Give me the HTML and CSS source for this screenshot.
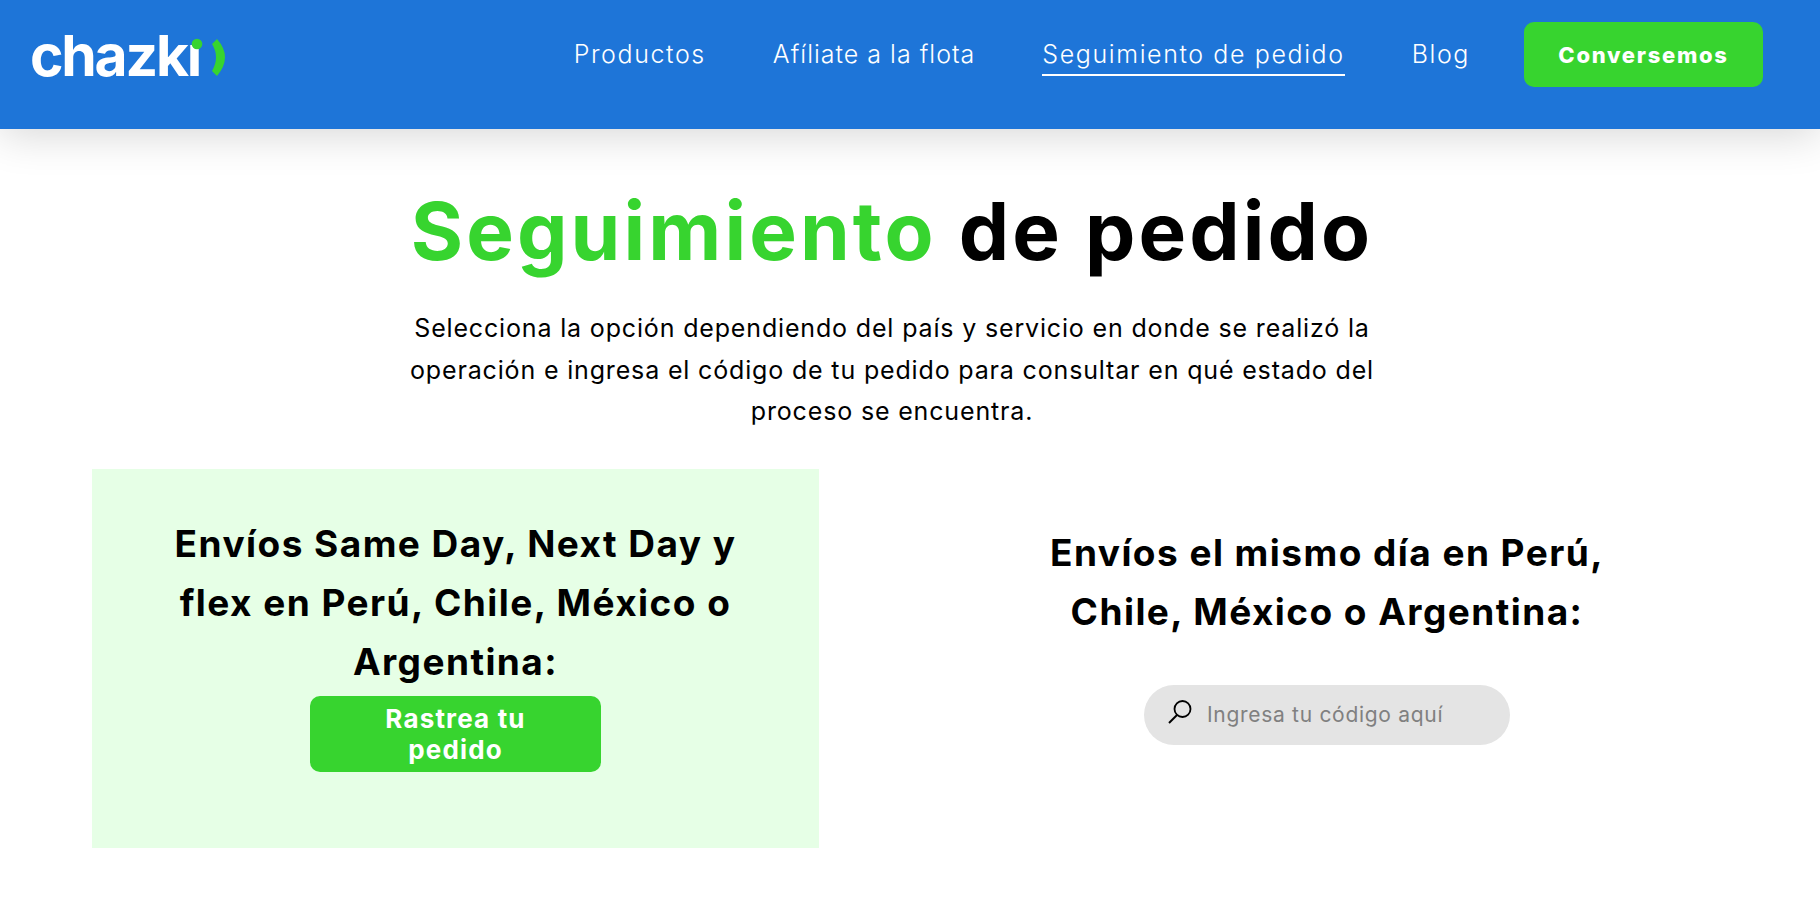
FILE: index.html
```html
<!DOCTYPE html>
<html lang="es">
<head>
<meta charset="utf-8">
<title>Seguimiento de pedido</title>
<link rel="stylesheet" href="styles.css">
</head>
<body>
<header class="header">
  <a class="logo" href="#"><span class="logo-text">chazkı</span><svg class="logo-mark" width="50" height="42" viewBox="0 0 50 42"><circle cx="16" cy="6" r="5.3" fill="#37d42f"/><path d="M36 1 Q52 19 36 38 L31 33 Q39 19 31 6 Z" fill="#37d42f"/></svg></a>
  <nav class="nav">
    <a class="nav-link" href="#">Productos</a>
    <a class="nav-link nav-tight" href="#">Afíliate a la flota</a>
    <a class="nav-link nav-active" href="#">Seguimiento de pedido</a>
    <a class="nav-link" href="#">Blog</a>
    <a class="cta" href="#">Conversemos</a>
  </nav>
</header>
<main class="main">
  <div class="hero">
    <h1 class="title"><span class="title-green">Seguimiento</span> de pedido</h1>
    <p class="intro">Selecciona la opción dependiendo del país y servicio en donde se realizó la operación e ingresa el código de tu pedido para consultar en qué estado del proceso se encuentra.</p>
  </div>
  <section class="cols">
    <div class="panel">
      <h2 class="panel-title">Envíos Same Day, Next Day y flex en Perú, Chile, México o Argentina:</h2>
      <a class="track" href="#">Rastrea tu pedido</a>
    </div>
    <div class="side">
      <h2 class="side-title">Envíos el mismo día en Perú, Chile, México o Argentina:</h2>
      <label class="search">
        <svg class="search-icon" width="26" height="26" viewBox="0 0 26 26"><circle cx="15.5" cy="10" r="8" fill="none" stroke="#000" stroke-width="1.8"/><path d="M10 16 L2 24" stroke="#000" stroke-width="2"/></svg>
        <input class="search-input" type="text" placeholder="Ingresa tu código aquí">
      </label>
    </div>
  </section>
</main>
</body>
</html>
```
FILE: styles.css
```css
* { box-sizing: border-box; }
html, body { margin: 0; height: 901px; overflow: hidden; background: #fff; }
body { font-family: Inter, "Noto Sans", "Liberation Sans", sans-serif; color: #000; }
a { text-decoration: none; color: inherit; }

.header {
  height: 129px;
  background: #1e75d8;
  display: flex;
  justify-content: space-between;
  padding: 22px 57px 0 31px;
  box-shadow: 0 6px 40px rgba(0,0,0,.16);
  position: relative;
}
.logo { display: flex; align-items: flex-start; height: 60px; position: relative; width: 200px; }
.logo-text {
  font-family: Inter, sans-serif;
  font-weight: 700;
  font-size: 57px;
  line-height: 60px;
  letter-spacing: -2.2px;
  margin: 4px 0 0 -1px;
  color: #fff;
}
.logo-mark { position: absolute; left: 150px; top: 16px; }

.nav { display: flex; align-items: flex-start; gap: 67px; }
.nav-link {
  color: #fff;
  font-size: 25px;
  font-weight: 300;
  letter-spacing: 1.6px;
  line-height: 32px;
  margin-top: 16px;
  padding-bottom: 4px;
  border-bottom: 2px solid transparent;
}
.nav-tight { letter-spacing: 1px; }
.nav-active { border-bottom-color: #fff; }
.cta {
  width: 239px;
  height: 65px;
  margin-left: -13px;
  background: #37d42f;
  border-radius: 10px;
  color: #fff;
  font-weight: 800;
  font-size: 22px;
  letter-spacing: 1.7px;
  display: flex;
  align-items: center;
  justify-content: center;
}

.main { display: flex; flex-direction: column; align-items: center; }
.hero {
  align-self: flex-start;
  width: 1784px;
  display: flex;
  flex-direction: column;
  align-items: center;
}
.title { margin: 54px 0 0; font-size: 80px; letter-spacing: 3.1px; line-height: 96px; font-weight: 700; text-align: center; }
.title-green { color: #37d42f; }
.intro {
  margin: 29px 0 0;
  width: 1010px;
  font-size: 25px;
  letter-spacing: .84px;
  line-height: 41.6px;
  font-weight: 400;
  text-align: center;
}
.cols {
  width: 100%;
  display: grid;
  grid-template-columns: 727px 832px;
  gap: 92px;
  padding-left: 92px;
  margin-top: 36px;
}
.panel {
  height: 379px;
  background: #e6ffe6;
  display: flex;
  flex-direction: column;
  align-items: center;
  padding-top: 45px;
}
.panel-title, .side-title {
  margin: 0;
  font-size: 37px;
  letter-spacing: 1.45px;
  line-height: 59px;
  font-weight: 700;
  text-align: center;
}
.panel-title { width: 600px; }
.track {
  width: 291px;
  height: 76px;
  margin-top: 5px;
  background: #37d42f;
  border-radius: 10px;
  color: #fff;
  font-weight: 700;
  font-size: 26px;
  letter-spacing: 1.15px;
  line-height: 31px;
  text-align: center;
  padding: 7px 40px;
}
.side { display: flex; flex-direction: column; align-items: center; padding-top: 54px; }
.side-title { width: 640px; }
.search {
  width: 366px;
  height: 60px;
  margin-top: 44px;
  background: #e4e4e4;
  border-radius: 30px;
  display: flex;
  align-items: center;
  padding-left: 23px;
  gap: 12px;
}
.search-icon { flex: none; margin-top: -6px; }
.search-input {
  flex: 1;
  min-width: 0;
  border: 0;
  outline: 0;
  background: transparent;
  font: 400 21px Inter, sans-serif;
  letter-spacing: .7px;
  color: #333;
}
.search-input::placeholder { color: #808080; opacity: 1; }
```
